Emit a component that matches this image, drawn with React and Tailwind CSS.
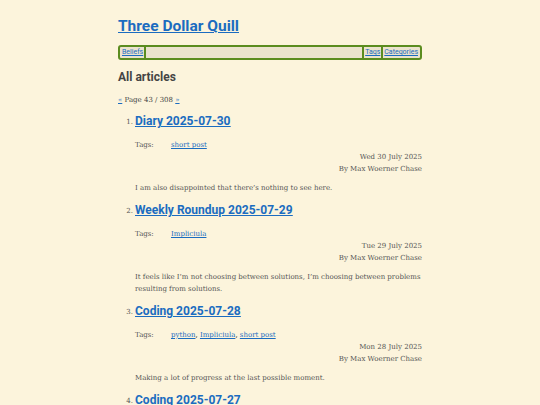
import React from 'react'

const posts = [
  {
    title: 'Diary 2025-07-30',
    tags: ['short post'],
    date: 'Wed 30 July 2025',
    summary: 'I am also disappointed that there’s nothing to see here.',
  },
  {
    title: 'Weekly Roundup 2025-07-29',
    tags: ['Impliciula'],
    date: 'Tue 29 July 2025',
    summary:
      'It feels like I’m not choosing between solutions, I’m choosing between problems resulting from solutions.',
  },
  {
    title: 'Coding 2025-07-28',
    tags: ['python', 'Impliciula', 'short post'],
    date: 'Mon 28 July 2025',
    summary: 'Making a lot of progress at the last possible moment.',
  },
  {
    title: 'Coding 2025-07-27',
    tags: ['python'],
    date: 'Sun 27 July 2025',
    summary: 'Working on things.',
  },
]

const heading = { fontFamily: 'Roboto, "Noto Sans", sans-serif' }

const Post = ({ post, n }) => (
  <li className="flex">
    <span className="w-[17px] shrink-0 pr-[2px] pt-[5px] text-right text-[7px] text-[#555]">{n}.</span>
    <div className="flex-1">
      <h3 className="text-[12px] font-bold leading-[18px] text-[#1b6cc0] underline" style={heading}>
        <a href="#">{post.title}</a>
      </h3>
      <div className="mt-[9px] flex text-[7px] leading-[12px]">
        <span className="w-[36px] text-[#555]">Tags:</span>
        <span>
          {post.tags.map((t, i) => (
            <span key={t}>
              <a href="#" className="text-[#1b6cc0] underline">{t}</a>
              {i < post.tags.length - 1 ? ', ' : ''}
            </span>
          ))}
        </span>
      </div>
      <div className="text-right text-[7px] leading-[12px] text-[#555]">
        <div>{post.date}</div>
        <div>By Max Woerner Chase</div>
      </div>
      <p className="mt-[7px] mb-[7px] text-[7px] leading-[12px] text-[#555]">{post.summary}</p>
    </div>
  </li>
)

export default function App() {
  return (
    <div
      className="h-[405px] overflow-hidden bg-[#fcf4dc]"
      style={{ fontFamily: '"DejaVu Serif", "Liberation Serif", serif' }}
    >
      <div className="mx-auto w-[304px] pt-[14px]">
        <h1 className="text-[15.5px] font-bold leading-[24px] text-[#1b6cc0] underline" style={heading}>
          <a href="#">Three Dollar Quill</a>
        </h1>
        <nav
          className="mt-[7px] flex h-[15px] items-center rounded-[3px] border-2 border-[#5b8c1f] bg-[#ebe3cd] px-[1px] text-[7px]"
          style={heading}
        >
          <a href="#" className="px-[1px] text-[#1b6cc0] underline">Beliefs</a>
          <span className="h-[11px] w-[2px] bg-[#5b8c1f]" />
          <span className="flex-1" />
          <span className="h-[11px] w-[2px] bg-[#5b8c1f]" />
          <a href="#" className="px-[1px] text-[#1b6cc0] underline">Tags</a>
          <span className="h-[11px] w-[2px] bg-[#5b8c1f]" />
          <a href="#" className="px-[1px] text-[#1b6cc0] underline">Categories</a>
        </nav>
        <h2 className="mt-[8px] text-[12px] font-bold leading-[18px] text-[#444]" style={heading}>
          All articles
        </h2>
        <p className="mt-[8px] text-[7px] leading-[12px] text-[#444]">
          <a href="#" className="text-[#1b6cc0] underline">«</a> Page 43 / 308{' '}
          <a href="#" className="text-[#1b6cc0] underline">»</a>
        </p>
        <ol className="mt-[6px]">
          {posts.map((p, i) => (
            <Post key={p.title} post={p} n={i + 1} />
          ))}
        </ol>
      </div>
    </div>
  )
}
